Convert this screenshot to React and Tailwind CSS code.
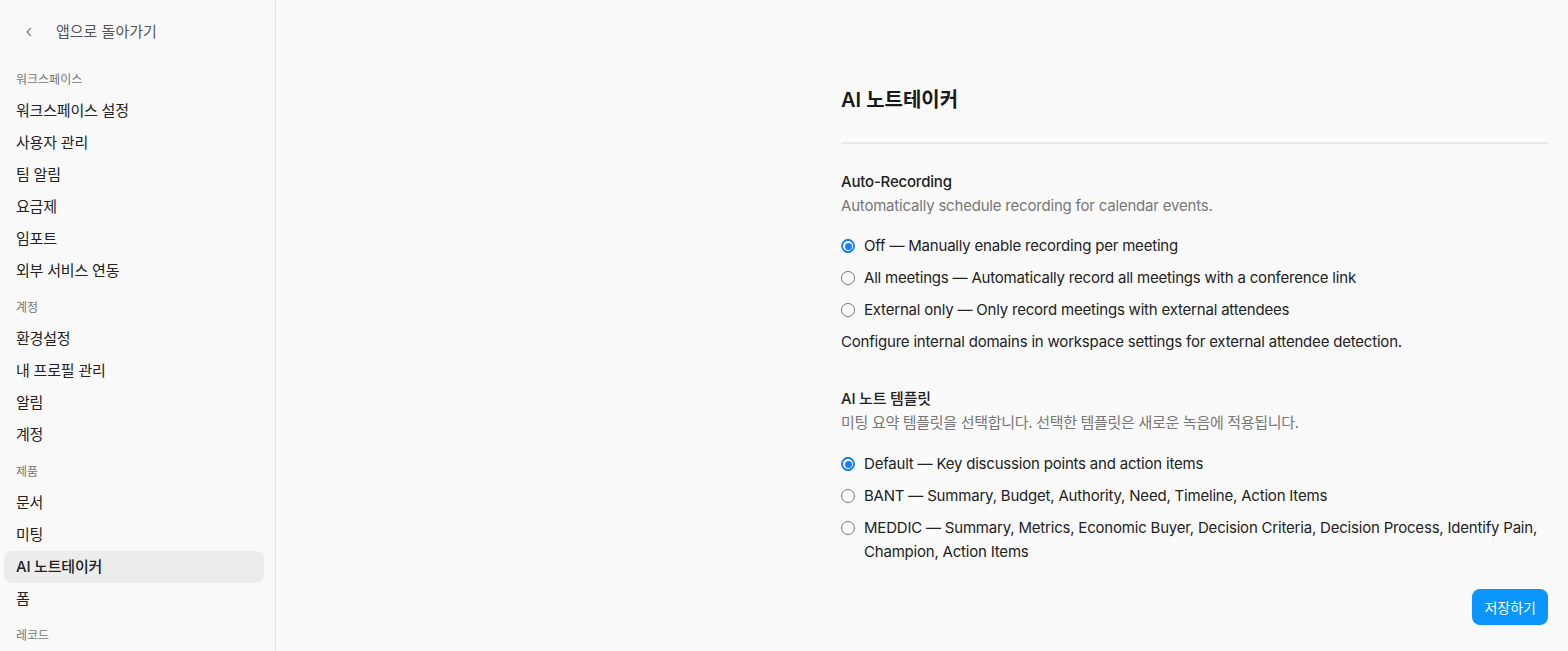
import { useState } from 'react'

const font = { fontFamily: 'Inter, "Noto Sans CJK KR", sans-serif' }

const nav = [
  { label: '워크스페이스', items: ['워크스페이스 설정', '사용자 관리', '팀 알림', '요금제', '임포트', '외부 서비스 연동'] },
  { label: '계정', items: ['환경설정', '내 프로필 관리', '알림', '계정'] },
  { label: '제품', items: ['문서', '미팅', 'AI 노트테이커', '폼'] },
  { label: '레코드', items: [] },
]

function Radio({ checked, onChange, children }) {
  return (
    <label className="flex items-start gap-[9px] cursor-pointer">
      <span className={`mt-[5px] shrink-0 w-[14px] h-[14px] rounded-full flex items-center justify-center border bg-white ${checked ? 'border-[#1a7ff0]' : 'border-[#767676]'}`}>
        {checked && <span className="w-[14px] h-[14px] rounded-full bg-[#1a7ff0] flex items-center justify-center">
          <span className="w-[10px] h-[10px] rounded-full bg-white flex items-center justify-center">
            <span className="w-[7px] h-[7px] rounded-full bg-[#1a7ff0]" />
          </span>
        </span>}
      </span>
      <input type="radio" className="hidden" checked={checked} onChange={onChange} />
      <span className="text-[15px] leading-6 tracking-[-0.2px] text-[#222]">{children}</span>
    </label>
  )
}

export default function App() {
  const [rec, setRec] = useState('off')
  const [tpl, setTpl] = useState('default')

  const recOpts = [
    ['off', 'Off — Manually enable recording per meeting'],
    ['all', 'All meetings — Automatically record all meetings with a conference link'],
    ['ext', 'External only — Only record meetings with external attendees'],
  ]
  const tplOpts = [
    ['default', 'Default — Key discussion points and action items'],
    ['bant', 'BANT — Summary, Budget, Authority, Need, Timeline, Action Items'],
    ['meddic', 'MEDDIC — Summary, Metrics, Economic Buyer, Decision Criteria, Decision Process, Identify Pain, Champion, Action Items'],
  ]

  return (
    <div style={font} className="flex h-[651px] overflow-hidden bg-[#fafafa] text-[#222]">
      {/* Sidebar */}
      <aside className="w-[276px] shrink-0 border-r border-[#e6e6e6] bg-[#f9f9f9] px-1 overflow-hidden">
        <div className="flex items-center h-6 mt-5 mb-[21px] pl-[20px] gap-[22px] text-[15px] text-[#555]">
          <svg width="10" height="12" viewBox="0 0 10 12" fill="none" stroke="#777" strokeWidth="1.2">
            <path d="M7 2 3 6l4 4" />
          </svg>
          앱으로 돌아가기
        </div>
        {nav.map(sec => (
          <div key={sec.label} className="mb-[6px]">
            <div className="px-3 h-[30px] flex items-center text-[12px] text-[#777]">{sec.label}</div>
            {sec.items.map(it => (
              <div key={it}
                className={`px-3 h-[32px] flex items-center text-[15px] tracking-[-0.2px] rounded-lg ${it === 'AI 노트테이커' ? 'bg-[#ececec] mr-[7px] font-medium' : ''}`}>
                {it}
              </div>
            ))}
          </div>
        ))}
      </aside>

      {/* Main */}
      <main className="flex-1 min-w-0">
        <div className="ml-[565px] mr-5 pt-[86px]">
          <h1 className="text-[20px] font-semibold leading-7 text-[#1a1a1a]">AI 노트테이커</h1>
          <div className="mt-[28px] h-[2px] bg-[#e8e8e8]" />

          <section className="mt-[26px]">
            <h2 className="text-[15px] font-medium leading-6 tracking-[-0.2px]">Auto-Recording</h2>
            <p className="text-[15px] leading-6 tracking-[-0.2px] text-[#777]">Automatically schedule recording for calendar events.</p>
            <div className="mt-[16px] flex flex-col gap-2">
              {recOpts.map(([k, t]) => (
                <Radio key={k} checked={rec === k} onChange={() => setRec(k)}>{t}</Radio>
              ))}
            </div>
            <p className="mt-2 text-[15px] leading-6 tracking-[-0.2px] text-[#222]">Configure internal domains in workspace settings for external attendee detection.</p>
          </section>

          <section className="mt-[33px]">
            <h2 className="text-[15px] font-medium leading-6 tracking-[-0.2px]">AI 노트 템플릿</h2>
            <p className="text-[15px] leading-6 tracking-[-0.3px] text-[#777]">미팅 요약 템플릿을 선택합니다. 선택한 템플릿은 새로운 녹음에 적용됩니다.</p>
            <div className="mt-[17px] flex flex-col gap-2">
              {tplOpts.map(([k, t]) => (
                <Radio key={k} checked={tpl === k} onChange={() => setTpl(k)}>{t}</Radio>
              ))}
            </div>
          </section>

          <div className="mt-[25px] flex justify-end">
            <button className="h-[36px] px-[12px] rounded-lg bg-[#0a95ff] text-white text-[14px]">저장하기</button>
          </div>
        </div>
      </main>
    </div>
  )
}
